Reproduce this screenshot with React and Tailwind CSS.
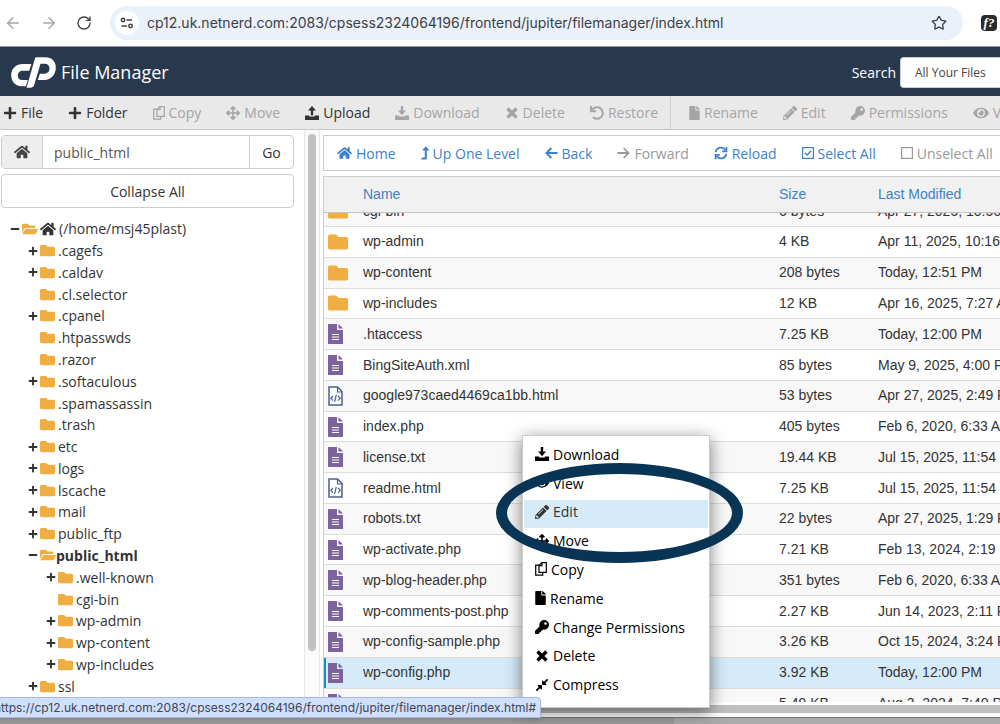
import { useState } from "react";
import {
  FaPlus,
  FaMinus,
  FaArrowsAlt,
  FaUndo,
  FaFile,
  FaPencilAlt,
  FaKey,
  FaEye,
  FaHome,
  FaFolder,
  FaFolderOpen,
  FaLevelUpAlt,
  FaCompressAlt,
} from "react-icons/fa";
import { ArrowLeft, ArrowRight, RotateCw, Star } from "lucide-react";

const URL_TEXT = "cp12.uk.netnerd.com:2083/cpsess2324064196/frontend/jupiter/filemanager/index.html";

function TrayIcon({ up, className }) {
  return (
    <svg viewBox="0 0 14 14" className={className} fill="currentColor" aria-hidden="true">
      <path d="M0 9.5h4.2v1h5.6v-1H14V14H0z" />
      {up ? <path d="M5.8 9.3V4.6H3L7 0l4 4.6H8.2v4.7z" /> : <path d="M5.8 0h2.4v4.6H11L7 9.2 3 4.6h2.8z" />}
    </svg>
  );
}

const UploadIcon = (props) => <TrayIcon up {...props} />;
const DownloadIcon = (props) => <TrayIcon {...props} />;

function CopyIcon({ className }) {
  return (
    <svg viewBox="0 0 12 14" className={className} fill="none" stroke="currentColor" strokeWidth="1.2" aria-hidden="true">
      <path d="M4 3.400L6.800.700h4.500v9.600H4z" />
      <path d="M7 .700v2.900H4M4 3.200H.700v10h7v-2.900" />
    </svg>
  );
}

function CrossIcon({ className }) {
  return (
    <svg viewBox="0 0 14 14" className={className} stroke="currentColor" strokeWidth="3.4" aria-hidden="true">
      <path d="M2.500 2.500l9 9M11.500 2.500l-9 9" />
    </svg>
  );
}

function BackIcon({ className }) {
  return (
    <svg viewBox="0 0 13 12" className={className} fill="none" stroke="currentColor" strokeWidth="2" aria-hidden="true">
      <path d="M12.500 6H1.500M6.300 1L1.500 6l4.800 5" />
    </svg>
  );
}

function ForwardIcon({ className }) {
  return (
    <svg viewBox="0 0 13 12" className={className} fill="none" stroke="currentColor" strokeWidth="1.8" aria-hidden="true">
      <path d="M.500 6h11M6.700 1l4.800 5-4.800 5" />
    </svg>
  );
}

function ReloadIcon({ className }) {
  return (
    <svg viewBox="0 0 16 16" className={className} fill="none" stroke="currentColor" strokeWidth="2" aria-hidden="true">
      <path d="M2 7a6 6 0 0 1 11-2.4M14 9a6 6 0 0 1-11 2.4" />
      <path d="M14.2 1v5H9.4M1.8 15v-5h4.800" />
    </svg>
  );
}

function BoxIcon({ checked, className }) {
  return (
    <svg viewBox="0 0 12 12" className={className} fill="none" stroke="currentColor" aria-hidden="true">
      <rect x=".6" y=".6" width="10.8" height="10.8" strokeWidth="1.2" />
      {checked && <path d="M3 5.800l2.200 2.200 4-4.300" strokeWidth="1.4" />}
    </svg>
  );
}

const CheckedIcon = (props) => <BoxIcon checked {...props} />;

function TuneIcon({ className }) {
  return (
    <svg viewBox="0 0 14 12" className={className} fill="none" stroke="currentColor" strokeWidth="1.5" aria-hidden="true">
      <circle cx="3" cy="3" r="1.7" />
      <path d="M6.5 3H12M1.5 9H7" />
      <circle cx="10.5" cy="9" r="1.7" />
    </svg>
  );
}

function CpanelLogo() {
  return (
    <svg viewBox="34 171 134 93" className="h-[31px] w-[45px]" fill="#fff" role="img" aria-label="cPanel">
      <path d="M95 192H69c-20 0-35 14-35 34 0 20 14 33 32 33h12l6-19H67c-8 0-13-6-13-13 0-9 6-15 14-15h20z" />
      <path d="M108 172h29c18 0 31 12 31 30 0 22-14 38-34 38h-20l6-19h13c10 0 16-6 16-16 0-9-6-14-14-14h-13l-19 64c-2 6-6 8-11 8H80l24-83c2-5 2-6 4-8z" />
    </svg>
  );
}

function DocIcon() {
  return (
    <svg viewBox="0 0 15 20" className="h-5 w-[15px]" aria-hidden="true">
      <path d="M0 0h9v6h6v14H0z" fill="#7c639b" />
      <path d="M10.500 0L15 4.600h-4.500z" fill="#7c639b" />
      <path d="M4 10.500h7M4 13h7M4 15.500h7" stroke="#fff" strokeWidth="1.2" />
    </svg>
  );
}

function HtmlIcon() {
  return (
    <svg viewBox="0 0 15 20" className="h-5 w-[15px]" fill="none" stroke="#4d5c8c" aria-hidden="true">
      <path d="M1 1h8.500L14 5.500V19H1z" fill="#fff" strokeWidth="1.500" />
      <path d="M9.500 1v5H14" strokeWidth="1.200" />
      <path d="M5 10l-2.200 2.300L5 14.600M10 10l2.200 2.300-2.200 2.300M8.300 8.800l-1.700 7" strokeWidth="1.200" />
    </svg>
  );
}

const TOOLBAR = [
  { label: "File", Icon: FaPlus },
  { label: "Folder", Icon: FaPlus },
  { label: "Copy", Icon: CopyIcon, size: "h-3.5 w-3", off: true },
  { label: "Move", Icon: FaArrowsAlt, off: true },
  { label: "Upload", Icon: UploadIcon },
  { label: "Download", Icon: DownloadIcon, off: true },
  { label: "Delete", Icon: CrossIcon, off: true },
  { label: "Restore", Icon: FaUndo, off: true },
];

const TOOLBAR_RIGHT = [
  { label: "Rename", Icon: FaFile, size: "h-3.5 w-[11px]", off: true },
  { label: "Edit", Icon: FaPencilAlt, off: true },
  { label: "Permissions", Icon: FaKey, off: true },
  { label: "View", Icon: FaEye, size: "h-3.5 w-4", off: true },
];

const ACTIONS = [
  { label: "Home", Icon: FaHome, size: "h-3.5 w-[15px]" },
  { label: "Up One Level", Icon: FaLevelUpAlt, size: "h-3.5 w-2" },
  { label: "Back", Icon: BackIcon, size: "h-3 w-[13px]" },
  { label: "Forward", Icon: ForwardIcon, size: "h-3 w-[13px]", off: true },
  { label: "Reload", Icon: ReloadIcon },
  { label: "Select All", Icon: CheckedIcon, size: "size-3" },
  { label: "Unselect All", Icon: BoxIcon, size: "size-3", off: true },
];

const TREE = [
  { name: ".cagefs", more: true },
  { name: ".caldav", more: true },
  { name: ".cl.selector" },
  { name: ".cpanel", more: true },
  { name: ".htpasswds" },
  { name: ".razor" },
  { name: ".softaculous", more: true },
  { name: ".spamassassin" },
  { name: ".trash" },
  { name: "etc", more: true },
  { name: "logs", more: true },
  { name: "lscache", more: true },
  { name: "mail", more: true },
  { name: "public_ftp", more: true },
  { name: "public_html", open: true },
  { name: ".well-known", more: true, deep: true },
  { name: "cgi-bin", deep: true },
  { name: "wp-admin", more: true, deep: true },
  { name: "wp-content", more: true, deep: true },
  { name: "wp-includes", more: true, deep: true },
  { name: "ssl", more: true },
];

const FILES = [
  ["dir", "cgi-bin", "6 bytes", "Apr 27, 2025, 10:56 AM"],
  ["dir", "wp-admin", "4 KB", "Apr 11, 2025, 10:16 AM"],
  ["dir", "wp-content", "208 bytes", "Today, 12:51 PM"],
  ["dir", "wp-includes", "12 KB", "Apr 16, 2025, 7:27 AM"],
  ["doc", ".htaccess", "7.25 KB", "Today, 12:00 PM"],
  ["doc", "BingSiteAuth.xml", "85 bytes", "May 9, 2025, 4:00 PM"],
  ["html", "google973caed4469ca1bb.html", "53 bytes", "Apr 27, 2025, 2:49 PM"],
  ["doc", "index.php", "405 bytes", "Feb 6, 2020, 6:33 AM"],
  ["doc", "license.txt", "19.44 KB", "Jul 15, 2025, 11:54 PM"],
  ["html", "readme.html", "7.25 KB", "Jul 15, 2025, 11:54 PM"],
  ["doc", "robots.txt", "22 bytes", "Apr 27, 2025, 1:29 PM"],
  ["doc", "wp-activate.php", "7.21 KB", "Feb 13, 2024, 2:19 PM"],
  ["doc", "wp-blog-header.php", "351 bytes", "Feb 6, 2020, 6:33 AM"],
  ["doc", "wp-comments-post.php", "2.27 KB", "Jun 14, 2023, 2:11 PM"],
  ["doc", "wp-config-sample.php", "3.26 KB", "Oct 15, 2024, 3:24 PM"],
  ["doc", "wp-config.php", "3.92 KB", "Today, 12:00 PM"],
  ["doc", "wp-cron.php", "5.49 KB", "Aug 3, 2024, 7:40 PM"],
];

const MENU = [
  { label: "Download", Icon: DownloadIcon },
  { label: "View", Icon: FaEye },
  { label: "Edit", Icon: FaPencilAlt },
  { label: "Move", Icon: FaArrowsAlt },
  { label: "Copy", Icon: CopyIcon, size: "h-3.5 w-3" },
  { label: "Rename", Icon: FaFile, size: "h-3.5 w-[11px]" },
  { label: "Change Permissions", Icon: FaKey },
  { label: "Delete", Icon: CrossIcon },
  { label: "Compress", Icon: FaCompressAlt },
];

function BrowserBar() {
  return (
    <div className="flex h-[46px] shrink-0 items-center bg-white pb-px pl-1 font-['Inter',sans-serif]">
      <button aria-label="Back" className="text-[#a3a5a8]">
        <ArrowLeft className="size-[18px]" />
      </button>
      <button aria-label="Forward" className="ml-[18px] text-[#a3a5a8]">
        <ArrowRight className="size-[18px]" />
      </button>
      <button aria-label="Reload" className="ml-[18px] text-[#3f4246]">
        <RotateCw className="size-4" />
      </button>
      <div className="ml-[18px] flex h-[34px] flex-1 items-center rounded-full bg-[#ebf1fa] pr-4 pl-[5px]">
        <button aria-label="Site information" className="grid size-6 place-items-center rounded-full bg-white text-[#3f4246]">
          <TuneIcon className="h-3 w-3.5" />
        </button>
        <input
          aria-label="Address"
          defaultValue={URL_TEXT}
          className="ml-2 min-w-0 flex-1 bg-transparent text-[14px] text-[#3c4045] outline-none"
        />
        <button aria-label="Bookmark this page" className="text-[#3f4246]">
          <Star className="size-4" />
        </button>
      </div>
      <button
        aria-label="Font finder"
        className="mr-[3px] ml-[18px] grid size-4 place-items-center rounded-sm bg-[#2b2b2b] font-['Liberation_Serif',serif] text-[13px] leading-none font-bold text-white italic"
      >
        f?
      </button>
    </div>
  );
}

function Header() {
  return (
    <header className="flex h-[50px] shrink-0 items-center border-t border-[#8d97a1] bg-[#29394d] pt-0.5 pl-[11px] text-white">
      <CpanelLogo />
      <h1 className="ml-[5px] text-[18px]">File Manager</h1>
      <label htmlFor="scope" className="mr-1 ml-auto text-[14px]">
        Search
      </label>
      <select
        id="scope"
        className="h-[31px] w-[100px] appearance-none rounded-l border border-r-0 border-[#cccccc] bg-white pl-3.5 text-[12px] text-[#444444]"
      >
        <option>All Your Files</option>
      </select>
    </header>
  );
}

function ToolButton({ label, Icon, size = "size-3.5", off }) {
  return (
    <button disabled={off} className="flex shrink-0 items-center gap-1 text-[#333333] disabled:text-[#a5a5a5]">
      <Icon className={size} />
      {label}
    </button>
  );
}

function Toolbar() {
  return (
    <div className="flex h-[34px] shrink-0 overflow-hidden border-b border-[#c8c8c8] bg-[#e9e9e9] text-[14px]">
      <div className="flex shrink-0 items-center gap-[25px] border-r border-[#d0d0d0] pr-3 pl-[3px]">
        {TOOLBAR.map((item) => (
          <ToolButton key={item.label} {...item} />
        ))}
      </div>
      <div className="flex shrink-0 items-center gap-[25px] pl-[18px]">
        {TOOLBAR_RIGHT.map((item) => (
          <ToolButton key={item.label} {...item} />
        ))}
      </div>
    </div>
  );
}

function TreeItem({ name, more, open, deep }) {
  return (
    <li className={`flex items-center ${deep ? "pl-[45px]" : "pl-[27px]"} ${open ? "font-bold" : ""}`}>
      <span className="w-3">
        {more && <FaPlus className="size-2.5" />}
        {open && <FaMinus className="size-2.5" />}
      </span>
      {open ? (
        <FaFolderOpen className="size-4 text-[#f0ad41]" />
      ) : (
        <FaFolder className="mr-[3px] size-[15px] text-[#f0ad41]" />
      )}
      <a href="#">{name}</a>
    </li>
  );
}

function Sidebar() {
  return (
    <aside className="flex w-[304px] shrink-0 flex-col pt-[5px] pr-2.5 pl-px text-[14px] text-[#333333]">
      <div className="flex h-[34px] shrink-0 rounded-sm border border-[#cccccc]">
        <button aria-label="Home" className="grid w-10 place-items-center bg-[#eeeeee] text-[#444444]">
          <FaHome className="size-4" />
        </button>
        <input
          aria-label="Path"
          defaultValue="public_html"
          className="min-w-0 flex-1 border-x border-[#cccccc] px-[11px] text-[#555555] outline-none"
        />
        <button className="w-[43px]">Go</button>
      </div>
      <button className="mt-[5px] h-[34px] shrink-0 rounded-sm border border-[#cccccc]">Collapse All</button>
      <ul className="mt-2.5 grid h-[479px] shrink-0 auto-rows-fr">
        <li className="flex items-center pl-[9px]">
          <FaMinus className="mr-0.5 size-2.5" />
          <FaFolderOpen className="mr-0.5 size-4 text-[#f0ad41]" />
          <FaHome className="mr-[3px] size-4" />
          <a href="#">(/home/msj45plast)</a>
        </li>
        {TREE.map((item) => (
          <TreeItem key={`${item.deep ? "sub-" : ""}${item.name}`} {...item} />
        ))}
      </ul>
    </aside>
  );
}

function Columns() {
  return (
    <colgroup>
      <col className="w-[39px]" />
      <col className="w-[416px]" />
      <col className="w-[99px]" />
      <col />
    </colgroup>
  );
}

function FileTable({ selected, onSelect }) {
  return (
    <div className="flex min-h-0 flex-1 flex-col overflow-hidden border-t border-l border-[#cccccc] font-['Liberation_Sans',sans-serif] text-[14px]">
      <table className="w-full min-w-[760px] table-fixed">
        <Columns />
        <thead>
          <tr className="h-[35px] border-b border-[#c4c4c4] bg-[#f1f1f1] text-left text-[#3c82c8]">
            <th />
            <th className="font-normal">Name</th>
            <th className="font-normal">Size</th>
            <th className="font-normal">Last Modified</th>
          </tr>
        </thead>
      </table>
      <div className="min-h-0 flex-1 overflow-hidden">
        <table className="-mt-4 h-[523px] w-full min-w-[760px] table-fixed">
          <Columns />
          <tbody>
            {FILES.map(([kind, name, size, modified]) => (
              <tr
                key={name}
                onClick={() => onSelect(name)}
                className={`border-b border-[#dddddd] text-[#333333] ${
                  selected === name ? "bg-[#d6ebfa]" : "odd:bg-[#f8f8f8] even:bg-white"
                }`}
              >
                <td className={`pl-1 ${selected === name ? "shadow-[inset_2px_0_0_#1a8ccb]" : ""}`}>
                  {kind === "dir" && <FaFolder className="size-5 text-[#f0ad41]" />}
                  {kind === "doc" && <DocIcon />}
                  {kind === "html" && <HtmlIcon />}
                </td>
                <td>{name}</td>
                <td>{size}</td>
                <td className="whitespace-nowrap">{modified}</td>
              </tr>
            ))}
          </tbody>
        </table>
      </div>
      <div className="mt-[3px] h-2 shrink-0 bg-[#bfbfbf]" />
    </div>
  );
}

function ContextMenu() {
  return (
    <ul
      role="menu"
      className="absolute top-[435px] left-[522px] grid h-[273px] w-[188px] auto-rows-fr border border-[#cfccc4] bg-white px-px py-1.5 text-[14px] text-black shadow-[0_4px_16px_rgba(0,0,0,0.5)]"
    >
      {MENU.map(({ label, Icon, size = "size-3.5" }) => (
        <li key={label} role="none" className="grid">
          <button
            role="menuitem"
            className={`flex items-center gap-1 pb-1 pl-[11px] ${label === "Edit" ? "bg-[#d6ebfa] text-[#333333]" : ""}`}
          >
            <Icon className={size} />
            {label}
          </button>
        </li>
      ))}
    </ul>
  );
}

export default function App() {
  const [selected, setSelected] = useState("wp-config.php");

  return (
    <div className="relative flex h-screen flex-col overflow-hidden bg-white font-['Open_Sans',sans-serif]">
      <BrowserBar />
      <Header />
      <Toolbar />
      <div className="flex min-h-0 flex-1 overflow-hidden">
        <Sidebar />
        <div className="w-4 shrink-0 border-x border-[#e8e8e8] bg-[#fafafa] px-[3px] pt-1">
          <div className="h-[517px] rounded-full bg-[#c1c1c1]" />
        </div>
        <main className="flex min-w-0 flex-1 flex-col pt-[5px] pl-[3px]">
          <nav className="mb-[5px] flex h-9 shrink-0 items-center gap-[25px] overflow-hidden border border-r-0 border-[#cccccc] pl-[13px] text-[14px]">
            {ACTIONS.map(({ label, Icon, size = "size-3.5", off }) => (
              <button
                key={label}
                disabled={off}
                className="flex shrink-0 items-center gap-1 text-[#3c82c8] disabled:text-[#999999]"
              >
                <Icon className={size} />
                {label}
              </button>
            ))}
          </nav>
          <FileTable selected={selected} onSelect={setSelected} />
        </main>
      </div>
      <div className="flex h-[11px] shrink-0 flex-col border-t-4 border-white">
        <div className="flex flex-1 border-t border-[#777777] bg-[#ababab]">
          <div className="w-[674px] border-r border-[#999999] bg-[#9c9c9c]" />
        </div>
      </div>

      <ContextMenu />
      <div className="pointer-events-none absolute top-[463px] left-[496px] h-[100px] w-[247px] rounded-[50%] border-[11px] border-[#083556]" />
      <div className="absolute bottom-[6px] -left-[7px] h-[21px] rounded-tr border border-[#a9b8d6] bg-[#cfdffc] pr-1 font-['Inter',sans-serif] text-[12px] leading-5 whitespace-nowrap text-[#3f4656] shadow-md">
        https://{URL_TEXT}#
      </div>
    </div>
  );
}
